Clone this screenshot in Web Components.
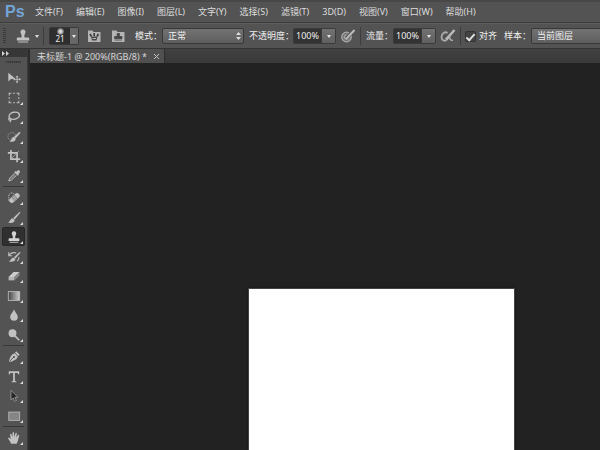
<!DOCTYPE html>
<html lang="zh-CN">
<head>
<meta charset="utf-8">
<title>未标题-1</title>
<style>
html, body { height: 100%; margin: 0; }
body { font: 9px/14px "Noto Sans", "Noto Sans CJK SC", sans-serif; color: #dedede; background: #222; overflow: hidden; }
</style>
</head>
<body>
<ps-app></ps-app>
<script>
const ICONS = {
  stamp: '<path d="M8 1.500a2.500 2.500 0 0 1 2.200 3.800L9.400 7.200v2.300h3.800q1 0 1 1V12.500H1.800V10.500q0-1 1-1h3.800V7.200L5.800 5.300A2.500 2.500 0 0 1 8 1.500z" fill="currentColor"/><path d="M3 13.500h10v1H3z" fill="currentColor"/>',
  move: '<path d="M1.500 2v10l2.600-2.500 5.200-.8z" fill="currentColor"/><path d="M11.500 6v7M8 9.500h7" stroke="currentColor"/><path d="M11.500 5l1.700 2H9.800zM11.500 14l1.700-2H9.800zM7 9.500l2-1.700v3.400zM16 9.500l-2-1.700v3.400z" fill="currentColor"/>',
  marquee: '<path d="M2.500 5V2.500H5M7 2.500h2M11 2.500h2.500V5M13.500 7v2M13.500 11v2.500H11M9 13.500H7M5 13.500H2.500V11M2.500 9V7" fill="none" stroke="currentColor" stroke-width="1.200"/>',
  lasso: '<ellipse cx="8.300" cy="6.500" rx="6" ry="4" transform="rotate(-12 8.300 6.500)" fill="none" stroke="currentColor" stroke-width="1.600"/><path d="M3 9c-2 1-1 3 .8 2.300M4 10c1 1 .5 2.500-.8 4" fill="none" stroke="currentColor" stroke-width="1.300"/>',
  quick: '<circle cx="5.500" cy="7.500" r="4.500" fill="none" stroke="currentColor" stroke-dasharray="1.500 1.200" opacity=".7"/><path d="M15.500 3L9.800 9.800 7.800 8 14.300 2z" fill="currentColor"/><path d="M7.300 7.800L10 10c-.3 3-3 4-7 3 2.200-.8 1.800-4 4.300-5.200z" fill="currentColor"/>',
  crop: '<path d="M4.500 1v10.500H15M1 4.500h10.500V15" fill="none" stroke="currentColor" stroke-width="1.900"/><path d="M5 11l8.500-8.500" stroke="currentColor" stroke-width=".8"/>',
  dropper: '<path d="M10.500 3.200C12 1 13.500 1 14.400 1.900s.6 2.300-1.500 3.800l.8.900-1.300 1.200-4.200-4.200 1.200-1.200z" fill="currentColor"/><path d="M8.500 5L3 10.500l-1 3.200 3-1L10.800 7.300" fill="#777" stroke="currentColor"/>',
  heal: '<path d="M2 11V6c0-4 4-5 6-2.500" fill="none" stroke="currentColor" stroke-dasharray="1.500 1"/><g transform="rotate(-42 8.500 8)"><rect x="1.500" y="5" width="14" height="6" rx="3" fill="currentColor"/><rect x="6" y="5" width="5" height="6" fill="#909090"/><path d="M7 7h1M9 7h1M7 9h1M9 9h1" stroke="#ddd"/></g>',
  brush: '<path d="M15.500 1.500L9 9.600 7.100 8 14.300 1z" fill="currentColor"/><path d="M6.500 8.400l2.200 1.900c.2 2.700-3.400 4.200-7.700 2.900 2.500-.6 2.500-4.200 5.500-4.800z" fill="currentColor"/>',
  history: '<path d="M15.500 3L9.700 9.800 8 8.300 14.300 2.200z" fill="currentColor"/><path d="M7.500 8.600l2 1.700c.2 2.400-3.200 3.900-7.500 2.900 2.500-.8 2.500-4.100 5.500-4.600z" fill="currentColor"/><path d="M2 2.500v4h4M2.500 5.500C5 3 8 2.700 10.500 3.300M13.500 8c.3 2-.5 3.700-2 4.700" fill="none" stroke="currentColor" stroke-width="1.200"/>',
  eraser: '<path d="M7.500 3.500h6.800L8.500 9H1.800z" fill="#ccc"/><path d="M1.800 9h6.700v4H1.800z" fill="#b5b5b5"/><path d="M14.300 3.500v4L8.500 13V9z" fill="#888"/>',
  gradient: '<defs><linearGradient id="g"><stop stop-color="#444"/><stop offset="1" stop-color="#d0d0d0"/></linearGradient></defs><rect x="1.500" y="3" width="13" height="10" fill="url(#g)" stroke="#bbb"/>',
  blur: '<path d="M8 1.500C9 5 12.300 7 12.300 10.200a4.300 4.300 0 0 1-8.600 0C3.700 7 7 5 8 1.500z" fill="currentColor"/>',
  dodge: '<circle cx="6.300" cy="6" r="4.500" fill="currentColor"/><path d="M9 9l5 5" stroke="currentColor" stroke-width="1.900"/>',
  pen: '<path d="M10.500 1.500l4 4-1.700 1.300-3.600-3.600zM8.800 3.800l3.500 3.500c-1 3.500-4 5-10.300 6.500C3.500 8 5 5 8.800 3.800z" fill="currentColor"/><path d="M2.500 13.300L7.500 8.300" stroke="#484848"/><circle cx="8" cy="8" r="1.100" fill="#484848"/>',
  type: '<path d="M2 1.500h12v3.700h-1c-.2-1.400-.7-1.900-2-1.900H9v8.500c0 .9.500 1.100 1.700 1.200v1H5.300V13c1.200-.1 1.700-.3 1.700-1.200V3.300H5c-1.300 0-1.800.5-2 1.900H2z" fill="currentColor"/>',
  select: '<path d="M4.500 1.500v11l2.700-2.300 1.700 4 1.900-.8-1.700-3.900h3.500z" fill="#262626" stroke="#999"/>',
  rect: '<rect x="2" y="3.500" width="12.500" height="9.500" fill="#858585" stroke="#b5b5b5"/>',
  hand: '<path d="M4.700 14.500C3.500 12 2.700 10.500 1.300 8.800c-.5-1 .8-1.600 1.700-.7l1.200 1.200L3.500 4c-.1-1.200 1.300-1.300 1.600-.2L6.200 7 6.300 2.200c0-1.300 1.600-1.300 1.700 0L8.300 6.900 9.600 2.700c.4-1.200 1.800-.8 1.600.4L10.500 7.300l1.800-2.500c.8-.9 1.900-.2 1.500.8-.8 2.500-1.200 6.400-2.800 8.900z" fill="currentColor"/>',
  zoom: '<circle cx="7" cy="7" r="4" fill="#777" stroke="currentColor" stroke-width="1.500"/><path d="M10 10l4 4" stroke="currentColor" stroke-width="2"/>',
  brushFolder: '<path d="M2 2.500h4.500l1 1.500H14.500v10H2z" fill="#b4b4b4"/><path d="M5.500 8.500L4 6M8.200 8V5M11 8.500L12.500 6" stroke="#3b3b3b" stroke-width="1.600"/><path d="M5 8.500h6.500L10.500 12.500H6z" fill="#484848"/><path d="M6.500 10.500h3.500" stroke="#b4b4b4"/>',
  stampFolder: '<path d="M2 2.500h4.500l1 1.500H14.500v10H2z" fill="#b4b4b4"/><path d="M7.200 5.500h2.200V8.500h2.600v2H4.600v-2h2.600zM4.600 12h7.400" fill="#444" stroke="#444" stroke-width=".8"/>',
  pressure: '<circle cx="6.500" cy="9" r="4.800" fill="#777" stroke="#aaa" stroke-width="1.200"/><circle cx="6.500" cy="9" r="2.200" fill="none" stroke="#aaa"/><path d="M14.500 2L6.500 10" stroke="#505050" stroke-width="3.500"/><path d="M14.500 2L7.500 9.500 6 11" stroke="#bbb" stroke-width="2"/>',
  airbrush: '<path d="M7.500 5C5 3 1.500 5.500 1.500 9s3.500 5 5.500 2.500l3-4" fill="none" stroke="#aaa" stroke-width="1.800"/><path d="M14.500 2L6 11.500" stroke="#bbb" stroke-width="2.500"/><path d="M10 7.500c-1 3 0 5 3 5" fill="none" stroke="#aaa" stroke-width="1.600"/>'
};

function define(name, css, html) {
  const template = document.createElement('template');
  customElements.define(name, class extends HTMLElement {
    constructor() {
      super();
      this.attachShadow({ mode: 'open' });
    }
    connectedCallback() {
      if (this.shadowRoot.childNodes.length) return;
      template.innerHTML = `<style>*{box-sizing:border-box}button,input,select{font:inherit;color:inherit;margin:0}${css}</style>${typeof html === 'function' ? html(this) : html}`;
      this.shadowRoot.append(template.content.cloneNode(true));
    }
  });
}

define('ps-icon',
  ':host{display:block;width:16px;height:16px;flex:none;color:#c2c2c2}svg{display:block;width:100%;height:100%}',
  el => `<svg viewBox="0 0 16 16" aria-hidden="true">${ICONS[el.getAttribute('name')]}</svg>`);

define('ps-menu-bar',
  `:host{display:flex;align-items:center;height:23px;padding-left:5px;background:#535353;border-top:2px solid #484848;border-bottom:1px solid #3c3c3c}
   .logo{width:30px;font:bold 16px/18px "Liberation Sans",sans-serif;color:#74a5d8}
   nav{display:flex;gap:13px}
   button{padding:0;border:0;background:none;white-space:nowrap}`,
  `<span class="logo">Ps</span><nav>${['文件(F)', '编辑(E)', '图像(I)', '图层(L)', '文字(Y)', '选择(S)', '滤镜(T)', '3D(D)', '视图(V)', '窗口(W)', '帮助(H)'].map(t => `<button>${t}</button>`).join('')}</nav>`);

define('ps-combo',
  `:host{display:flex;height:16px;width:43px;flex:none;border:1px solid #3a3a3a;border-radius:2px;background:#333}
   input{width:27px;padding:0 0 0 2px;border:0;background:none;outline:0;color:#eee}
   button{flex:1;padding:0;border:0;border-left:1px solid #3a3a3a;background:linear-gradient(#727272,#606060);display:grid;place-items:center}
   i{border:2px solid transparent;border-top:3px solid #e4e4e4;border-bottom:0}`,
  el => `<input aria-label="${el.getAttribute('label')}" value="${el.getAttribute('value')}"><button aria-label="${el.getAttribute('label')}"><i></i></button>`);

define('ps-select',
  `:host{display:block;position:relative;flex:none;width:82px;height:16px}
   select{appearance:none;display:block;width:100%;height:100%;padding:0 5px;border:1px solid #383838;border-radius:2px;background:linear-gradient(#727272,#5e5e5e);color:#f0f0f0;outline:0}
   svg{position:absolute;right:3px;top:4px;width:5px;height:8px;pointer-events:none}`,
  el => `<select aria-label="${el.getAttribute('label')}"><option>${el.getAttribute('value')}</option></select><svg viewBox="0 0 5 8"><path d="M0 3l2.500-3L5 3zM0 5h5L2.500 8z" fill="#ddd"/></svg>`);

define('ps-brush-picker',
  `:host{display:block;flex:none;width:30px;height:18px}
   button{display:flex;width:100%;height:100%;padding:0;border:1px solid #383838;border-radius:2px;background:#2e2e2e;color:#f0f0f0}
   .tip{flex:1;align-self:stretch;display:flex;flex-direction:column;align-items:center;line-height:8px;font-size:8px}
   .dot{width:7px;height:7px;flex:none;border-radius:50%;background:radial-gradient(#ddd 20%,#777 60%,transparent)}
   .arrow{width:8px;align-self:stretch;display:grid;place-items:center;background:#676767}
   i{border:2px solid transparent;border-top:3px solid #e4e4e4;border-bottom:0}`,
  `<button aria-label="画笔"><span class="tip"><span class="dot"></span><span>21</span></span><span class="arrow"><i></i></span></button>`);

define('ps-options-bar',
  `:host{display:flex;align-items:center;height:26px;padding-left:3px;overflow:hidden;white-space:nowrap;background:#535353;border-top:1px solid #5c5c5c;border-bottom:1px solid #333;color:#efefef}
   .grip{width:3px;height:16px;flex:none;background:repeating-linear-gradient(#3a3a3a 0 1px,#535353 1px 2px)}
   .sep{width:1px;height:18px;flex:none;background:#3d3d3d}
   .icon{display:flex;align-items:center;gap:4px;padding:0;border:0;background:none;flex:none}
   i{border:2px solid transparent;border-top:3px solid #ddd;border-bottom:0}
   .group{display:flex;align-items:center;flex:none}
   .field{width:27px}.wide{width:44px}
   .preset{margin-left:9px;margin-right:4px}.brush{margin:0 7px 0 5px}.gap{gap:8px;margin-right:9px}
   .check{gap:3px;margin:0 7px 0 4px}
   .after{margin:0 4px}
   .label{margin-left:5px}
   .align{appearance:none;display:grid;place-items:center;width:11px;height:11px;margin:0;background:#434343;border:1px solid #333;border-radius:2px}
   .align:checked::before{content:"";box-sizing:border-box;width:5px;height:9px;margin-bottom:3px;border:solid #e0e0e0;border-width:0 2px 2px 0;transform:rotate(42deg)}
   .source{width:100px}`,
  `<span class="grip"></span>
   <button class="icon preset" aria-label="仿制图章"><ps-icon name="stamp"></ps-icon><i></i></button><span class="sep"></span>
   <ps-brush-picker class="brush"></ps-brush-picker>
   <span class="group gap"><button class="icon" aria-label="画笔面板"><ps-icon name="brushFolder"></ps-icon></button><button class="icon" aria-label="仿制源面板"><ps-icon name="stampFolder"></ps-icon></button></span>
   <span class="group"><span class="field">模式：</span><ps-select label="模式" value="正常"></ps-select></span>
   <span class="group label"><span class="wide">不透明度：</span><ps-combo label="不透明度" value="100%"></ps-combo></span>
   <button class="icon after" aria-label="不透明度压力"><ps-icon name="pressure"></ps-icon></button><span class="sep"></span>
   <span class="group label"><span class="field">流量：</span><ps-combo label="流量" value="100%"></ps-combo></span>
   <button class="icon after" aria-label="喷枪"><ps-icon name="airbrush"></ps-icon></button><span class="sep"></span>
   <label class="group check"><input class="align" type="checkbox" checked>对齐</label>
   <span class="group"><span class="field">样本：</span><ps-select class="source" label="样本" value="当前图层"></ps-select></span>`);

define('ps-tool',
  `:host{display:block;padding:0 2px}
   button{position:relative;display:grid;place-items:center;width:23px;height:19px;padding:0;border:1px solid transparent;border-radius:2px;background:none}
   :host([active]) button{background:#303030;border-color:#272727}
   ps-icon{width:14px;height:14px}
   :host([active]) ps-icon{color:#d4d4d4}
   .more{position:absolute;right:1px;bottom:1px;border:solid transparent;border-width:3px 0 0 3px;border-right:3px solid #ddd;border-left:0}`,
  el => `<button aria-label="${el.getAttribute('name')}"><ps-icon name="${el.getAttribute('name')}"></ps-icon>${el.hasAttribute('single') ? '' : '<span class="more"></span>'}</button>`);

define('ps-toolbar',
  `:host{display:block;width:28px;overflow:hidden;background:#535353;border-right:1px solid #3a3a3a}
   .head{display:flex;width:100%;height:8px;padding:0 0 0 2px;border:0;background:#373737;align-items:center}
   .head svg{width:7px;height:5px}
   .grip{height:2px;margin:4px 6px 5px;background:repeating-linear-gradient(90deg,#383838 0 1px,#484848 1px 2px)}
   .tools{display:grid;grid-auto-rows:20px 19px}
   hr{height:1px;margin:1px 3px;border:0;background:#373737}`,
  () => {
    const groups = [['move', 'marquee', 'lasso', 'quick', 'crop', 'dropper'], ['heal', 'brush', 'stamp', 'history', 'eraser', 'gradient', 'blur', 'dodge'], ['pen', 'type', 'select', 'rect'], ['hand', 'zoom']];
    return '<button class="head" aria-label="展开面板"><svg viewBox="0 0 7 5"><path d="M0 0l3 2.500L0 5zM4 0l3 2.500L4 5z" fill="#d0d0d0"/></svg></button><div class="grip"></div>' +
      groups.map(g => `<div class="tools">${g.map(n => `<ps-tool name="${n}"${n === 'stamp' ? ' active' : ''}${n === 'move' || n === 'zoom' ? ' single' : ''}></ps-tool>`).join('')}</div>`).join('<hr>');
  });

define('ps-document',
  `:host{display:flex;flex-direction:column;min-width:0;background:#222}
   .tabs{display:flex;flex:none;height:14px;background:linear-gradient(#414141,#393939)}
   .tab{display:flex;align-items:center;gap:7px;padding:1px 5px 0 7px;background:#505050;border-right:1px solid #2e2e2e;white-space:nowrap;color:#d6d6d6}
   .tab button{display:grid;padding:0;border:0;background:none}
   .tab svg{width:5px;height:5px}
   .work{flex:1;min-height:0;display:grid;grid-template-columns:219fr 265fr 86fr;padding-top:226px}
   .page{grid-column:2;background:#fff;box-shadow:0 0 0 1px #444,0 0 3px #000}`,
  `<div class="tabs"><div class="tab"><span>未标题-1 @ 200%(RGB/8) *</span><button aria-label="关闭"><svg viewBox="0 0 5 5"><path d="M0 0l5 5M5 0L0 5" stroke="#c4c4c4"/></svg></button></div></div>
   <div class="work"><div class="page"></div></div>`);

define('ps-app',
  `:host{display:flex;flex-direction:column;height:100vh}
   ps-menu-bar,ps-options-bar{flex:none}
   main{flex:1;min-height:0;display:grid;grid-template-columns:auto 1fr;grid-template-rows:minmax(0,1fr);gap:2px;background:#2b2b2b}`,
  `<ps-menu-bar></ps-menu-bar><ps-options-bar></ps-options-bar><main><ps-toolbar></ps-toolbar><ps-document></ps-document></main>`);
</script>
</body>
</html>
